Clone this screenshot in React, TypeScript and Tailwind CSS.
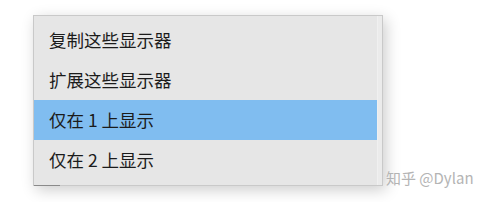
import React from "react";

const items = ["复制这些显示器", "扩展这些显示器", "仅在 1 上显示", "仅在 2 上显示"];

export default function App() {
  return (
    <div
      className="relative w-[486px] h-[202px] bg-white overflow-hidden pt-[15px] pl-[33px]"
      style={{ fontFamily: '"Microsoft YaHei", "Noto Sans CJK SC", sans-serif' }}
    >
      <div className="relative w-[350px] h-[171px] border border-[#c9c9c9] bg-[#e6e6e6] shadow-[3px_4px_14px_rgba(0,0,0,0.2)] flex">
        <div className="flex-1 flex flex-col pt-[4px]">
          {items.map((t, i) => (
            <div
              key={t}
              className={`h-[40px] flex items-center pl-[15px] text-[17.5px] text-[#1b1b1b] ${
                i === 2 ? "bg-[#80bdf0]" : ""
              }`}
            >
              {t}
            </div>
          ))}
        </div>
        <div className="w-[5px] bg-[#ebebeb] border-l border-[#f0f0f0]" />
        <div className="absolute left-0 bottom-[-1px] w-[26px] h-[1px] bg-[#8a8a8a]" />
      </div>
      <div className="absolute left-[386px] top-[167px] text-[15px] text-[#b4b4b4]">
        知乎 @Dylan
      </div>
    </div>
  );
}
